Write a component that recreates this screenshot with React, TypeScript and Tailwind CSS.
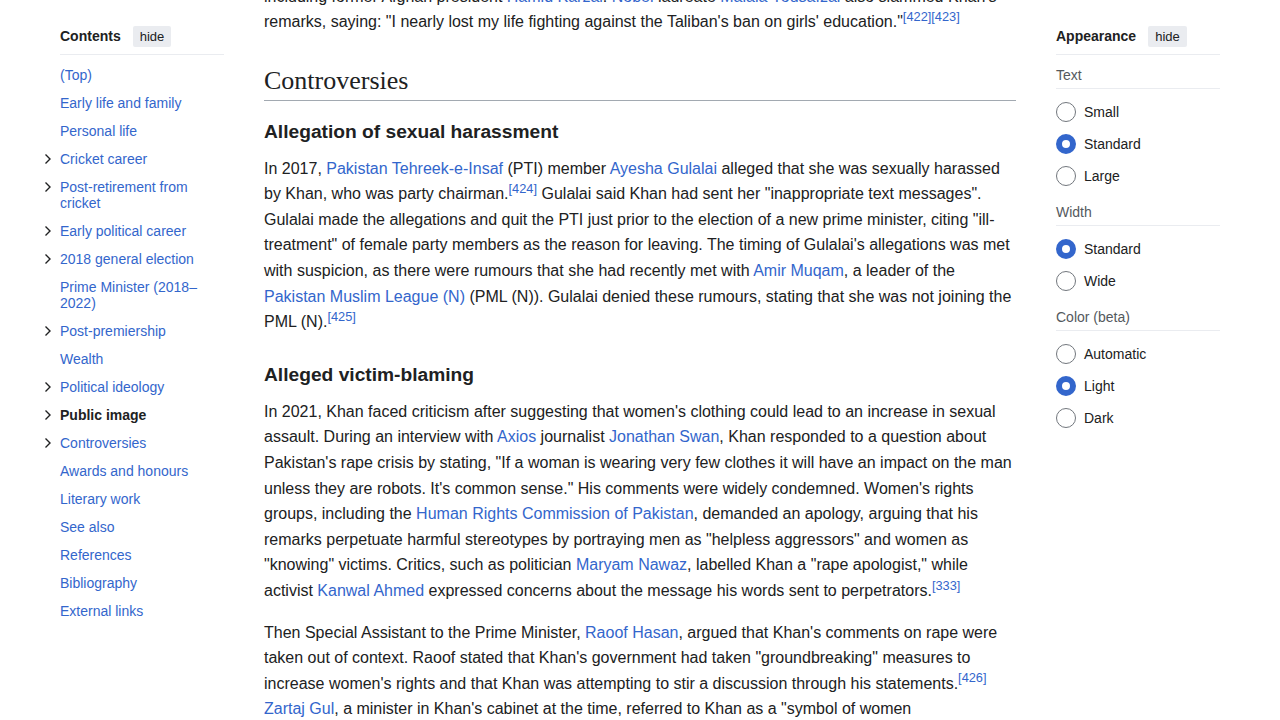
import React from "react";

const L = ({ children }: { children: React.ReactNode }) => (
  <a className="text-[#3366cc] no-underline">{children}</a>
);
const S = ({ children }: { children: React.ReactNode }) => (
  <sup className="text-[12.8px] leading-none text-[#3366cc]">{children}</sup>
);

const Chevron = () => (
  <svg width="8" height="12" viewBox="0 0 8 12" className="mt-[2px]">
    <path d="M1.5 1.5 L6 6 L1.5 10.5" fill="none" stroke="#202122" strokeWidth="1.4" />
  </svg>
);

type TocItem = { label: React.ReactNode; toggle?: boolean; bold?: boolean };
const toc: TocItem[] = [
  { label: "(Top)" },
  { label: "Early life and family" },
  { label: "Personal life" },
  { label: "Cricket career", toggle: true },
  { label: <>Post-retirement from<br />cricket</>, toggle: true },
  { label: "Early political career", toggle: true },
  { label: "2018 general election", toggle: true },
  { label: <>Prime Minister (2018–<br />2022)</> },
  { label: "Post-premiership", toggle: true },
  { label: "Wealth" },
  { label: "Political ideology", toggle: true },
  { label: "Public image", toggle: true, bold: true },
  { label: "Controversies", toggle: true },
  { label: "Awards and honours" },
  { label: "Literary work" },
  { label: "See also" },
  { label: "References" },
  { label: "Bibliography" },
  { label: "External links" },
];

const HideBtn = () => (
  <span className="h-[21px] px-[7px] rounded-[2px] bg-[#eaecf0] text-[13px] leading-[21px] text-[#202122] font-normal">
    hide
  </span>
);

const Radio = ({ checked, label }: { checked?: boolean; label: string }) => (
  <div className="h-[32px] flex items-center gap-[8px]">
    <span
      className={
        checked
          ? "w-[20px] h-[20px] rounded-full border-[6px] border-[#3366cc] bg-white box-border"
          : "w-[20px] h-[20px] rounded-full border border-[#72777d] bg-white box-border"
      }
    />
    <span className="text-[14px] text-[#202122]">{label}</span>
  </div>
);

const Section = ({ title, items }: { title: string; items: { label: string; checked?: boolean }[] }) => (
  <div className="mt-[6px]">
    <div className="h-[28px] pt-[2px] flex items-center border-b border-[#eaecf0] text-[14px] text-[#54595d]">{title}</div>
    <div className="mt-[7px]">
      {items.map((it) => (
        <Radio key={it.label} label={it.label} checked={it.checked} />
      ))}
    </div>
  </div>
);

export default function App() {
  return (
    <div
      className="w-[1280px] h-[720px] overflow-hidden bg-white text-[#202122] flex pl-[40px] pr-[60px] gap-[40px]"
      style={{ fontFamily: '"Liberation Sans", Arial, sans-serif' }}
    >
      {/* Left TOC */}
      <aside className="w-[184px] shrink-0">
        <div className="ml-[20px] pt-[26px] pb-[7px] border-b border-[#eaecf0]">
          <div className="h-[21px] flex items-center gap-[12px]">
            <span className="text-[14px] font-bold">Contents</span>
            <HideBtn />
          </div>
        </div>
        <ul className="pt-[6px]">
          {toc.map((it, i) => (
            <li key={i} className="flex py-[6px]">
              <div className="w-[20px] shrink-0 pl-[4px]">{it.toggle ? <Chevron /> : null}</div>
              <span
                className={
                  it.bold
                    ? "text-[14px] leading-[16px] font-bold text-[#202122]"
                    : "text-[14px] leading-[16px] text-[#3366cc]"
                }
              >
                {it.label}
              </span>
            </li>
          ))}
        </ul>
      </aside>

      {/* Main content */}
      <main className="w-[752px] shrink-0 text-[16px] leading-[25.6px]">
        <p className="-mt-[16.5px] whitespace-nowrap">
          including former Afghan president <L>Hamid Karzai</L>. <L>Nobel</L> laureate <L>Malala Yousafzai</L> also slammed Khan's
          <br />
          remarks, saying: "I nearly lost my life fighting against the Taliban's ban on girls' education."<S>[422][423]</S>
        </p>
        <h2
          className="mt-[29px] pb-[3px] border-b border-[#a2a9b1] text-[26px] leading-[33px]"
          style={{ fontFamily: '"Liberation Serif", Georgia, serif' }}
        >
          Controversies
        </h2>
        <h3 className="mt-[17px] text-[19.2px] leading-[28px] font-bold">Allegation of sexual harassment</h3>
        <p className="mt-[10px] whitespace-nowrap">
          In 2017, <L>Pakistan Tehreek-e-Insaf</L> (PTI) member <L>Ayesha Gulalai</L> alleged that she was sexually harassed
          <br />
          by Khan, who was party chairman.<S>[424]</S> Gulalai said Khan had sent her "inappropriate text messages".
          <br />
          Gulalai made the allegations and quit the PTI just prior to the election of a new prime minister, citing "ill-
          <br />
          treatment" of female party members as the reason for leaving. The timing of Gulalai's allegations was met
          <br />
          with suspicion, as there were rumours that she had recently met with <L>Amir Muqam</L>, a leader of the
          <br />
          <L>Pakistan Muslim League (N)</L> (PML (N)). Gulalai denied these rumours, stating that she was not joining the
          <br />
          PML (N).<S>[425]</S>
        </p>
        <h3 className="mt-[26px] text-[19.2px] leading-[28px] font-bold">Alleged victim-blaming</h3>
        <p className="mt-[10px] whitespace-nowrap">
          In 2021, Khan faced criticism after suggesting that women's clothing could lead to an increase in sexual
          <br />
          assault. During an interview with <L>Axios</L> journalist <L>Jonathan Swan</L>, Khan responded to a question about
          <br />
          Pakistan's rape crisis by stating, "If a woman is wearing very few clothes it will have an impact on the man
          <br />
          unless they are robots. It's common sense." His comments were widely condemned. Women's rights
          <br />
          groups, including the <L>Human Rights Commission of Pakistan</L>, demanded an apology, arguing that his
          <br />
          remarks perpetuate harmful stereotypes by portraying men as "helpless aggressors" and women as
          <br />
          "knowing" victims. Critics, such as politician <L>Maryam Nawaz</L>, labelled Khan a "rape apologist," while
          <br />
          activist <L>Kanwal Ahmed</L> expressed concerns about the message his words sent to perpetrators.<S>[333]</S>
        </p>
        <p className="mt-[16px] whitespace-nowrap">
          Then Special Assistant to the Prime Minister, <L>Raoof Hasan</L>, argued that Khan's comments on rape were
          <br />
          taken out of context. Raoof stated that Khan's government had taken "groundbreaking" measures to
          <br />
          increase women's rights and that Khan was attempting to stir a discussion through his statements.<S>[426]</S>
          <br />
          <L>Zartaj Gul</L>, a minister in Khan's cabinet at the time, referred to Khan as a "symbol of women
        </p>
      </main>

      {/* Right appearance */}
      <aside className="w-[164px] shrink-0">
        <div className="pt-[26px] pb-[7px] border-b border-[#eaecf0]">
          <div className="h-[21px] flex items-center gap-[12px]">
            <span className="text-[14px] font-bold">Appearance</span>
            <HideBtn />
          </div>
        </div>
        <Section
          title="Text"
          items={[{ label: "Small" }, { label: "Standard", checked: true }, { label: "Large" }]}
        />
        <Section title="Width" items={[{ label: "Standard", checked: true }, { label: "Wide" }]} />
        <Section
          title="Color (beta)"
          items={[{ label: "Automatic" }, { label: "Light", checked: true }, { label: "Dark" }]}
        />
      </aside>
    </div>
  );
}
